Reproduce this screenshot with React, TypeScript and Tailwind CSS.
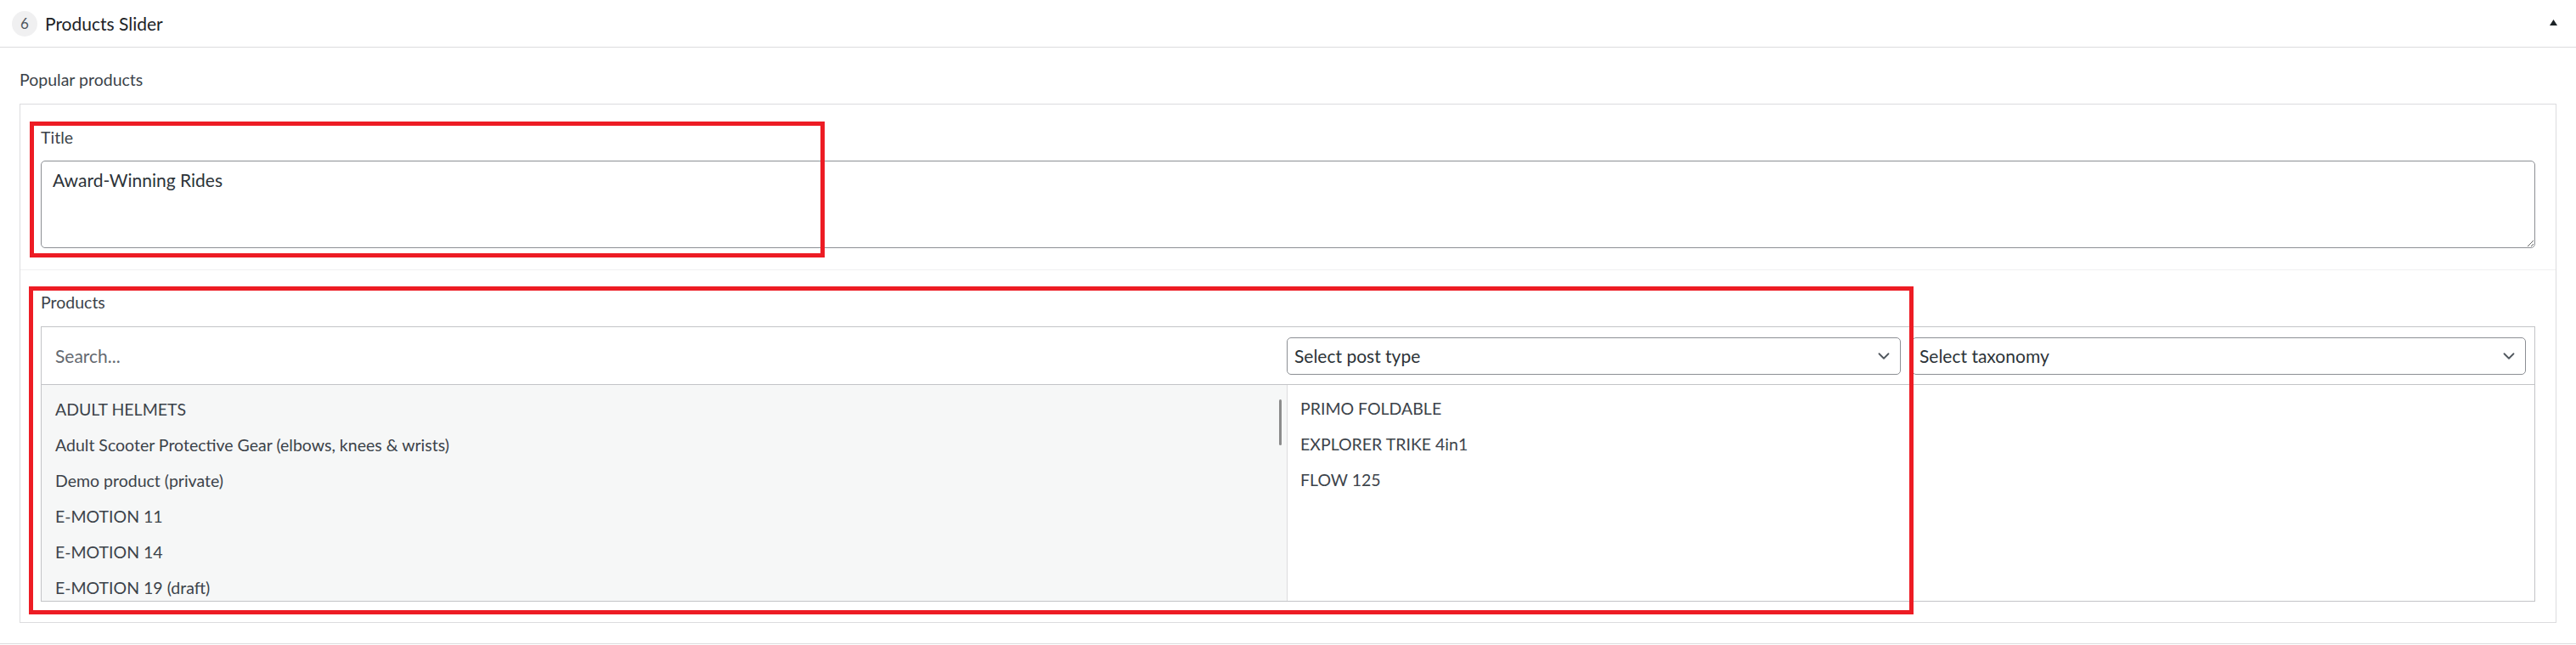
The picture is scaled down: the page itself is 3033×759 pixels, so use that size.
import { ChevronDown } from 'lucide-react'

const leftItems = [
  'ADULT HELMETS',
  'Adult Scooter Protective Gear (elbows, knees & wrists)',
  'Demo product (private)',
  'E-MOTION 11',
  'E-MOTION 14',
  'E-MOTION 19 (draft)',
]

const rightItems = ['PRIMO FOLDABLE', 'EXPLORER TRIKE 4in1', 'FLOW 125']

function SelectBox({ label }: { label: string }) {
  return (
    <div className="w-[723px] h-[44px] shrink-0 flex items-center justify-between border border-[#8c8f94] rounded-[5px] pl-[8px] pr-[8px] text-[21px] text-[#2c3338]">
      <span>{label}</span>
      <ChevronDown className="w-[22px] h-[22px] text-[#50575e]" strokeWidth={2} />
    </div>
  )
}

export default function App() {
  return (
    <div className="relative w-full bg-white text-[#3c434a] font-['Lato','Liberation_Sans',sans-serif]">
      {/* accordion header */}
      <div className="h-[56px] flex items-center justify-between border-b border-[#dcdcde] pl-[14px] pr-[22px]">
        <div className="flex items-center gap-[9px]">
          <div className="w-[30px] h-[30px] rounded-full bg-[#f0f0f1] flex items-center justify-center text-[17px] text-[#50575e]">6</div>
          <div className="text-[21px] text-[#1d2327] leading-[28px]">Products Slider</div>
        </div>
        <svg width="9" height="7" viewBox="0 0 9 7" className="mb-[2px]">
          <path d="M4.5 0 L9 7 L0 7 Z" fill="#1d2327" />
        </svg>
      </div>

      {/* body */}
      <div className="px-[23px] pt-[24px] pb-[24px] border-b border-[#dcdcde]">
        <div className="text-[19.5px] leading-[28px]">Popular products</div>
        <div className="mt-[14px] border border-[#dcdcde]">
          {/* Title field */}
          <div className="px-[24px] pt-[25px] pb-[25px] border-b border-[#f0f0f1]">
            <div className="text-[19.5px] leading-[28px]">Title</div>
            <textarea
              readOnly
              defaultValue="Award-Winning Rides"
              className="mt-[13px] block w-full h-[103px] border border-[#8c8f94] rounded-[5px] pl-[13px] pt-[8px] text-[21px] leading-[28px] text-[#2c3338] outline-none resize-y font-['Lato','Liberation_Sans',sans-serif]"
            />
          </div>

          {/* Products field */}
          <div className="px-[24px] pt-[24px] pb-[24px]">
            <div className="text-[19.5px] leading-[28px]">Products</div>
            <div className="mt-[14px] border border-[#c3c4c7] h-[324px] flex flex-col">
              <div className="h-[68px] shrink-0 flex items-center gap-[13px] pr-[10px] border-b border-[#c3c4c7]">
                <div className="flex-1 pl-[16px] text-[21px] text-[#646970]">Search...</div>
                <SelectBox label="Select post type" />
                <SelectBox label="Select taxonomy" />
              </div>
              <div className="flex-1 flex min-h-0 overflow-hidden">
                <div className="relative flex-1 bg-[#f6f7f7] border-r border-[#dcdcde] pt-[8px]">
                  {leftItems.map((t) => (
                    <div key={t} className="h-[42px] flex items-center pl-[16px] text-[19.5px]">{t}</div>
                  ))}
                  <div className="absolute right-[6px] top-[17px] w-[3px] h-[54px] rounded-full bg-[#8c8c8c]" />
                </div>
                <div className="w-[1468px] shrink-0 pt-[7px]">
                  {rightItems.map((t) => (
                    <div key={t} className="h-[42px] flex items-center pl-[15px] text-[19.5px]">{t}</div>
                  ))}
                </div>
              </div>
            </div>
          </div>
        </div>
      </div>
      <div className="h-[2px]" />

      {/* annotation boxes */}
      <div className="absolute left-[35px] top-[143px] w-[936px] h-[160px] border-[5px] border-[#ed1c24] pointer-events-none" />
      <div className="absolute left-[34px] top-[337px] w-[2219px] h-[386px] border-[5px] border-[#ed1c24] pointer-events-none" />
    </div>
  )
}
